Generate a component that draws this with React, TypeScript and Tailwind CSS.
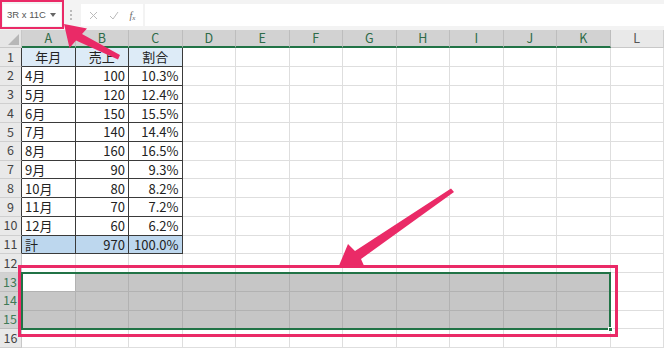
import React from 'react';

const COLS = ['A', 'B', 'C', 'D', 'E', 'F', 'G', 'H', 'I', 'J', 'K', 'L'];

// 表データ（A1:C11）
const table: string[][] = [
  ['年月', '売上', '割合'],
  ['4月', '100', '10.3%'],
  ['5月', '120', '12.4%'],
  ['6月', '150', '15.5%'],
  ['7月', '140', '14.4%'],
  ['8月', '160', '16.5%'],
  ['9月', '90', '9.3%'],
  ['10月', '80', '8.2%'],
  ['11月', '70', '7.2%'],
  ['12月', '60', '6.2%'],
  ['計', '970', '100.0%'],
];

const font = { fontFamily: '"Noto Sans CJK JP", "Liberation Sans", sans-serif' };

function Cell({ row, col }: { row: number; col: number }) {
  const inTable = row >= 1 && row <= 11 && col <= 2;
  const selected = row >= 13 && row <= 15 && col <= 10;
  const active = row === 13 && col === 0;

  if (inTable) {
    const text = table[row - 1][col];
    const bg = row === 1 ? 'bg-[#ddebf7]' : row === 11 ? 'bg-[#bdd7ee]' : 'bg-white';
    const align = row === 1 ? 'justify-center' : col === 0 ? 'justify-start pl-[3px]' : 'justify-end pr-[3px]';
    return (
      <div className={`flex items-center ${bg} ${align} border-r border-b border-[#3a3a3a] text-[13px] text-[#222] leading-none`}>
        {text}
      </div>
    );
  }

  if (selected) {
    return (
      <div className={`${active ? 'bg-white' : 'bg-[#c6c6c6]'} border-r border-b border-[#b2b2b2]`} />
    );
  }

  return <div className="bg-white border-r border-b border-[#dedede]" />;
}

export default function App() {
  const rows = Array.from({ length: 16 }, (_, i) => i + 1);

  return (
    <div className="relative w-[664px] h-[348px] overflow-hidden bg-white" style={font}>
      {/* Formula bar */}
      <div className="flex h-[30px] bg-[#f3f3f3] items-center gap-[2px]">
        <div className="ml-[3px] w-[58px] h-[22px] bg-white flex items-center justify-between pl-[4px] pr-[5px]">
          <span className="text-[9.5px] text-[#555]" style={{ fontFamily: '"Liberation Sans", sans-serif' }}>3R x 11C</span>
          <svg width="6" height="4" viewBox="0 0 6 4"><path d="M0 0h6L3 4z" fill="#666" /></svg>
        </div>
        <div className="w-[16px] flex flex-col items-center gap-[2px]">
          <span className="w-[2px] h-[2px] bg-[#bbb]" />
          <span className="w-[2px] h-[2px] bg-[#bbb]" />
          <span className="w-[2px] h-[2px] bg-[#bbb]" />
        </div>
        <div className="w-[62px] h-[22px] bg-white flex items-center justify-around text-[#b5b5b5] text-[11px] px-[2px]">
          <svg width="9" height="9" viewBox="0 0 9 9"><path d="M1 1l7 7M8 1L1 8" stroke="#bbb" strokeWidth="1" /></svg>
          <svg width="10" height="9" viewBox="0 0 10 9"><path d="M1 5l3 3 5-7" stroke="#bbb" strokeWidth="1" fill="none" /></svg>
          <span className="italic text-[#666] text-[10px]" style={{ fontFamily: '"Liberation Serif", serif' }}>f<sub className="text-[7px]">x</sub></span>
        </div>
        <div className="flex-1 h-[22px] bg-white" />
      </div>

      {/* Sheet grid */}
      <div className="relative grid grid-cols-[22px_repeat(12,53.5px)] grid-rows-[18px_repeat(16,18.75px)]">
        {/* Corner */}
        <div className="bg-[#e6e6e6] border-r border-b border-[#c8c8c8] relative">
          <svg className="absolute right-[2px] bottom-[2px]" width="11" height="11" viewBox="0 0 11 11">
            <path d="M11 0v11H0z" fill="#b7b7b7" />
          </svg>
        </div>
        {COLS.map((c, i) => (
          <div
            key={c}
            className={`flex items-center justify-center text-[12.5px] border-r ${
              i <= 10
                ? 'bg-[#d2d2d2] text-[#2e6b48] border-[#bdbdbd] border-b-2 border-b-[#217346]'
                : 'bg-[#e9e9e9] text-[#555] border-[#cfcfcf] border-b border-b-[#c8c8c8]'
            }`}
          >
            {c}
          </div>
        ))}

        {rows.map((r) => (
          <React.Fragment key={r}>
            <div
              className={`flex items-center justify-center text-[12.5px] border-b ${
                r >= 13 && r <= 15
                  ? 'bg-[#d2d2d2] text-[#3f7a57] border-[#bdbdbd] border-r-2 border-r-[#217346]'
                  : r <= 11
                  ? 'bg-[#e9e9e9] text-[#444] border-[#cfcfcf] border-r border-r-[#3a3a3a]'
                  : 'bg-[#e9e9e9] text-[#444] border-[#cfcfcf] border-r border-r-[#c8c8c8]'
              }`}
            >
              {r}
            </div>
            {COLS.map((c, ci) => (
              <Cell key={c} row={r} col={ci} />
            ))}
          </React.Fragment>
        ))}

        {/* Selection outline */}
        <div className="absolute left-[21px] top-[242px] w-[590px] h-[58px] border-2 border-[#217346] pointer-events-none">
          <div className="absolute -right-[4px] -bottom-[4px] w-[5px] h-[5px] bg-[#217346] border border-white" />
        </div>
      </div>

      {/* Annotations */}
      <div className="absolute left-0 top-0 w-[64px] h-[29px] border-2 border-[#ea2a67] pointer-events-none" />
      <div className="absolute left-[18px] top-[265px] w-[600px] h-[72px] border-[3px] border-[#ea2a67] pointer-events-none" />
      <svg className="absolute left-0 top-0 pointer-events-none" width="664" height="348" viewBox="0 0 664 348">
        <polygon
          points="64,24 87,28.5 82,34 120,55 118,59.5 76,40.5 69.5,48"
          fill="#ea2a67"
        />
        <polygon
          points="338,268 348,244 355,251 451,188.5 454,192 361,259 365,268"
          fill="#ea2a67"
        />
      </svg>
    </div>
  );
}
